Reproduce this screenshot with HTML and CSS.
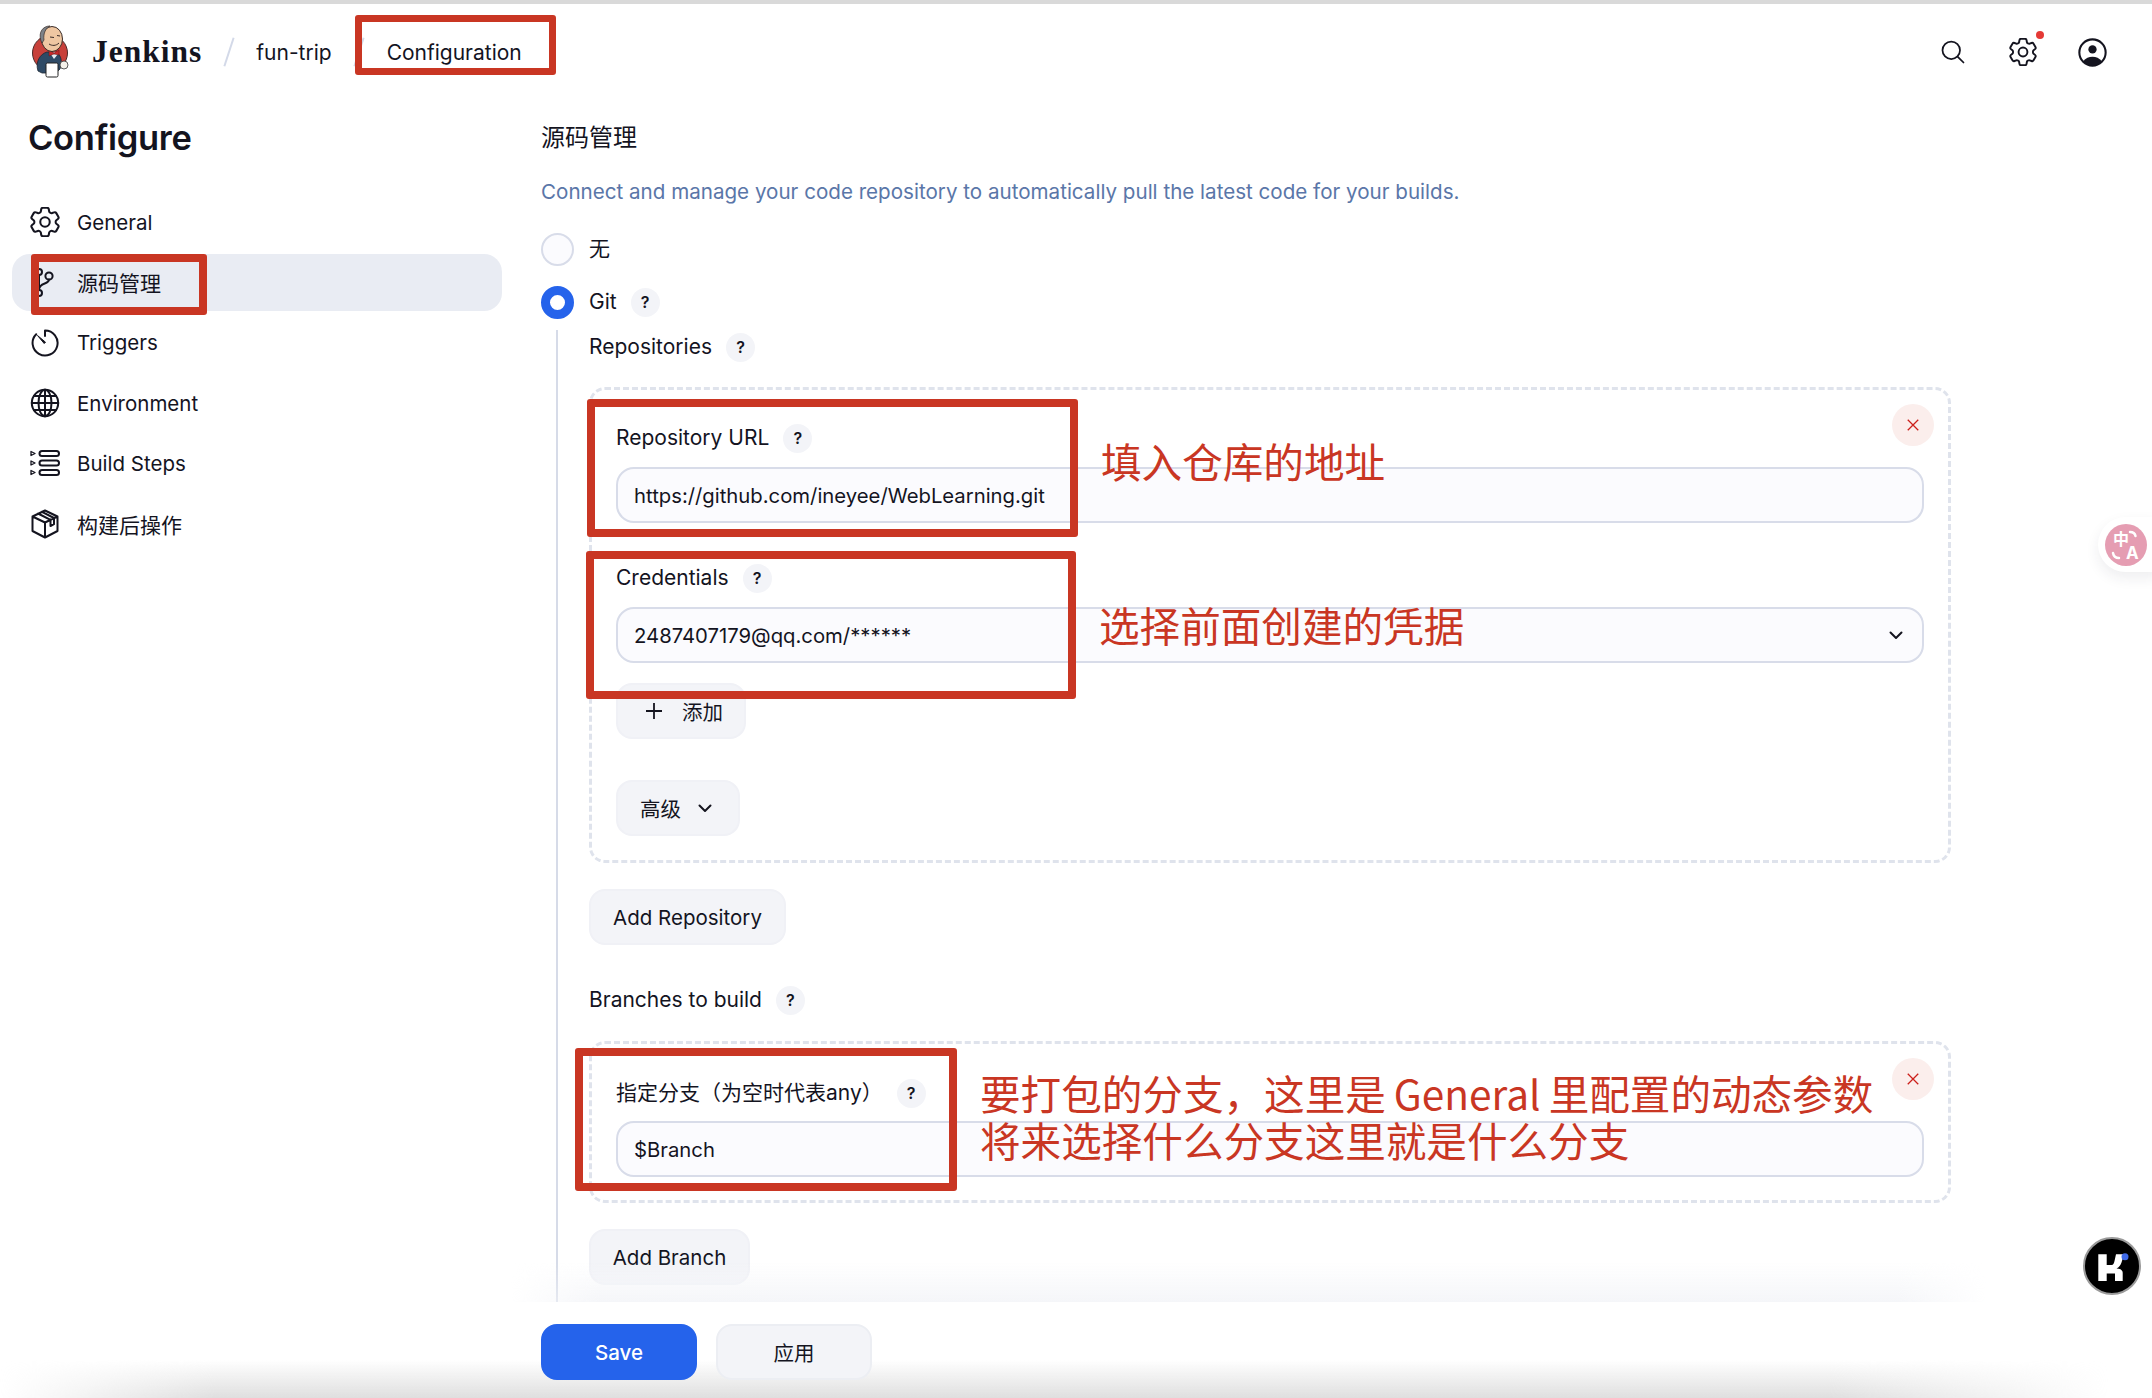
FILE: index.html
```html
<!DOCTYPE html>
<html lang="zh">
<head>
<meta charset="utf-8">
<title>Jenkins - fun-trip Configuration</title>
<link rel="stylesheet" href="styles.css">
</head>
<body>
<div class="app">
  <div class="strip"></div>
  <header class="topbar">
    <svg class="logo" viewBox="30 26 40 54" aria-hidden="true">
      <circle cx="50" cy="54" r="17.500" fill="#c8403a" stroke="#4a2a28" stroke-width="1"/>
      <path d="M38 72C35 63 40 55 47 53L57 54C62 57 62 64 60 70L56 74H42Z" fill="#2e4a66" stroke="#1c2733" stroke-width=".8"/>
      <path d="M50 54L54 60L58 55L55 53Z" fill="#e8edf2"/>
      <path d="M49 51L54 54L59 51V56L54 55L49 57Z" fill="#c8282a" stroke="#5a1a1a" stroke-width=".5"/>
      <ellipse cx="52" cy="40" rx="10.500" ry="12.500" fill="#efc7a2" stroke="#3a2c28" stroke-width="1"/>
      <path d="M41 42C38 33 43 27 50 27C46 29 43 34 44 41L42 44Z" fill="#7d8288" stroke="#3a2c28" stroke-width=".7"/>
      <path d="M50 38l4 .5M57 36.500l3 .5M49 45c3 2 7 2 10-1" fill="none" stroke="#3a2c28" stroke-width="1"/>
      <rect x="46" y="64" width="12" height="14" rx="1.500" fill="#fff" stroke="#222" stroke-width="1"/>
      <circle cx="64" cy="66" r="4" fill="#f4f1ea" stroke="#333" stroke-width=".8"/>
    </svg>
    <span class="brand">Jenkins</span>
    <span class="slash"></span>
    <span class="crumb">fun-trip</span>
    <span class="slash"></span>
    <span class="crumb crumb-last">Configuration</span>
    <div class="top-actions">
      <svg class="top-icon" viewBox="0 0 32 32" aria-hidden="true"><circle cx="14" cy="14" r="10" class="ln"/><path d="M21.500 21.500L28 28" class="ln"/></svg>
      <span class="gear-wrap">
        <svg class="top-icon" viewBox="2.500 2.500 19 19" aria-hidden="true"><path class="ln-thin" d="M9.594 3.94c.09-.542.56-.94 1.11-.94h2.593c.55 0 1.02.398 1.11.94l.213 1.281c.063.374.313.686.645.87.074.04.147.083.22.127.325.196.72.257 1.075.124l1.217-.456a1.125 1.125 0 0 1 1.37.49l1.296 2.247a1.125 1.125 0 0 1-.26 1.431l-1.003.827c-.293.241-.438.613-.43.992a7.723 7.723 0 0 1 0 .255c-.008.378.137.75.43.991l1.004.827c.424.35.534.955.26 1.43l-1.298 2.247a1.125 1.125 0 0 1-1.369.491l-1.217-.456c-.355-.133-.75-.072-1.076.124a6.47 6.47 0 0 1-.22.128c-.331.183-.581.495-.644.869l-.213 1.281c-.09.543-.56.94-1.11.94h-2.594c-.55 0-1.019-.398-1.11-.94l-.213-1.281c-.062-.374-.312-.686-.644-.87a6.52 6.52 0 0 1-.22-.127c-.325-.196-.72-.257-1.076-.124l-1.217.456a1.125 1.125 0 0 1-1.369-.49l-1.297-2.247a1.125 1.125 0 0 1 .26-1.431l1.004-.827c.292-.24.437-.613.43-.991a6.932 6.932 0 0 1 0-.255c.007-.38-.138-.751-.43-.992l-1.004-.827a1.125 1.125 0 0 1-.26-1.43l1.297-2.247a1.125 1.125 0 0 1 1.37-.491l1.216.456c.356.133.751.072 1.076-.124.072-.044.146-.086.22-.128.332-.183.582-.495.644-.869l.214-1.28Z"/><circle cx="12" cy="12" r="3" class="ln-thin"/></svg>
        <span class="dot"></span>
      </span>
      <svg class="top-icon user-icon" viewBox="0 0 28 28" aria-hidden="true"><circle cx="14" cy="14" r="12.700" class="ln"/><circle cx="14" cy="11" r="4" fill="#14141f"/><path d="M5 22.500C7.500 19 10.500 18 14 18s6.500 1 9 4.500C20.500 25.500 17.500 26.700 14 26.700S7.500 25.500 5 22.500Z" fill="#14141f"/></svg>
    </div>
  </header>

  <main class="main">
    <aside class="sidebar">
      <h1 class="side-title">Configure</h1>
      <nav class="side-nav">
        <a class="side-item">
          <svg class="side-icon" viewBox="2.500 2.500 19 19" aria-hidden="true"><path class="ln-thin" d="M9.594 3.94c.09-.542.56-.94 1.11-.94h2.593c.55 0 1.02.398 1.11.94l.213 1.281c.063.374.313.686.645.87.074.04.147.083.22.127.325.196.72.257 1.075.124l1.217-.456a1.125 1.125 0 0 1 1.37.49l1.296 2.247a1.125 1.125 0 0 1-.26 1.431l-1.003.827c-.293.241-.438.613-.43.992a7.723 7.723 0 0 1 0 .255c-.008.378.137.75.43.991l1.004.827c.424.35.534.955.26 1.43l-1.298 2.247a1.125 1.125 0 0 1-1.369.491l-1.217-.456c-.355-.133-.75-.072-1.076.124a6.47 6.47 0 0 1-.22.128c-.331.183-.581.495-.644.869l-.213 1.281c-.09.543-.56.94-1.11.94h-2.594c-.55 0-1.019-.398-1.11-.94l-.213-1.281c-.062-.374-.312-.686-.644-.87a6.52 6.52 0 0 1-.22-.127c-.325-.196-.72-.257-1.076-.124l-1.217.456a1.125 1.125 0 0 1-1.369-.49l-1.297-2.247a1.125 1.125 0 0 1 .26-1.431l1.004-.827c.292-.24.437-.613.43-.991a6.932 6.932 0 0 1 0-.255c.007-.38-.138-.751-.43-.992l-1.004-.827a1.125 1.125 0 0 1-.26-1.43l1.297-2.247a1.125 1.125 0 0 1 1.37-.491l1.216.456c.356.133.751.072 1.076-.124.072-.044.146-.086.22-.128.332-.183.582-.495.644-.869l.214-1.28Z"/><circle cx="12" cy="12" r="3" class="ln-thin"/></svg>
          <span>General</span>
        </a>
        <a class="side-item side-active side-cjk">
          <svg class="side-icon" viewBox="0 0 30 30" aria-hidden="true"><circle cx="9" cy="5" r="3" class="ln"/><circle cx="9" cy="26" r="3" class="ln"/><circle cx="19" cy="9" r="3.600" class="ln"/><path class="ln" d="M9 8V23M19 12.600C19 18 9 15 9 23"/></svg>
          <span>源码管理</span>
        </a>
        <a class="side-item">
          <svg class="side-icon" viewBox="0 0 30 30" aria-hidden="true"><path class="ln" d="M15 2.500A12.500 12.500 0 1 1 6.200 6.200M15 2.500V8"/><path d="M7.500 7.500L15.500 14.200L14.200 15.500Z" fill="#14141f" stroke="#14141f" stroke-width="1" stroke-linejoin="round"/></svg>
          <span>Triggers</span>
        </a>
        <a class="side-item">
          <svg class="side-icon" viewBox="0 0 30 30" aria-hidden="true"><circle cx="15" cy="15" r="13.200" class="ln"/><ellipse cx="15" cy="15" rx="6.500" ry="13.200" class="ln"/><path class="ln" d="M15 1.800V28.200M1.800 15H28.200M4 8H26M4 22H26"/></svg>
          <span>Environment</span>
        </a>
        <a class="side-item">
          <svg class="side-icon" viewBox="0 0 30 30" aria-hidden="true"><rect x="9.500" y="3" width="19.500" height="5" rx="2.500" class="ln"/><rect x="9.500" y="12.500" width="19.500" height="5" rx="2.500" class="ln"/><rect x="9.500" y="22" width="19.500" height="5" rx="2.500" class="ln"/><path class="ln-s" d="M1 3.500L5 5.500L1 7.500ZM1 13L5 15L1 17ZM1 22.500L5 24.500L1 26.500Z"/></svg>
          <span>Build Steps</span>
        </a>
        <a class="side-item side-cjk">
          <svg class="side-icon" viewBox="0 0 30 30" aria-hidden="true"><path class="ln" d="M15 1.500L27.500 7.500V22L15 28.500L2.500 22V7.500ZM2.500 7.500L15 13.500L27.500 7.500M15 13.500V28.500M8 4.500L20.500 10.800V17L24 15.200V9M12 2.800L24 9"/></svg>
          <span>构建后操作</span>
        </a>
      </nav>
    </aside>

    <section class="content">
      <h2 class="section-title">源码管理</h2>
      <p class="section-desc">Connect and manage your code repository to automatically pull the latest code for your builds.</p>

      <div class="radio-row radio-none">
        <span class="radio"></span><span>无</span>
      </div>
      <div class="radio-row radio-git">
        <span class="radio radio-on"></span><span>Git</span><span class="help">?</span>
      </div>

      <div class="git-body">
        <div class="label-row label-first"><span>Repositories</span><span class="help">?</span></div>

        <div class="card card-repo">
          <button class="close"><svg viewBox="0 0 16 16" aria-hidden="true"><path d="M2 2L14 14M14 2L2 14"/></svg></button>
          <div class="label-row"><span>Repository URL</span><span class="help">?</span></div>
          <div class="field">https://github.com/ineyee/WebLearning.git</div>
          <div class="label-row label-gap"><span>Credentials</span><span class="help">?</span></div>
          <div class="field field-select">
            <span>2487407179@qq.com/******</span>
            <svg class="chev" viewBox="0 0 16 16" aria-hidden="true"><path d="M2.500 5.500L8 11L13.500 5.500"/></svg>
          </div>
          <button class="btn btn-add"><svg class="plus" viewBox="0 0 18 18" aria-hidden="true"><path d="M9 1V17M1 9H17"/></svg><span>添加</span></button>
          <button class="btn btn-adv"><span>高级</span><svg class="chev chev-sm" viewBox="0 0 16 16" aria-hidden="true"><path d="M2.500 5.500L8 11L13.500 5.500"/></svg></button>
        </div>

        <button class="btn btn-plain btn-repo">Add Repository</button>

        <div class="label-row label-branches"><span>Branches to build</span><span class="help">?</span></div>

        <div class="card card-branch">
          <button class="close"><svg viewBox="0 0 16 16" aria-hidden="true"><path d="M2 2L14 14M14 2L2 14"/></svg></button>
          <div class="label-row label-spec"><span>指定分支（为空时代表any）</span><span class="help">?</span></div>
          <div class="field field-branch">$Branch</div>
        </div>

        <button class="btn btn-plain btn-branch">Add Branch</button>
      </div>
      <div class="fade"></div>
    </section>
  </main>

  <footer class="footer">
    <button class="action action-save">Save</button>
    <button class="action">应用</button>
  </footer>

  <div class="mark mark-config"></div>
  <div class="mark mark-side"></div>
  <div class="mark mark-repo"></div>
  <div class="mark mark-cred"></div>
  <div class="mark mark-branch"></div>

  <div class="note note-repo">填入仓库的地址</div>
  <div class="note note-cred">选择前面创建的凭据</div>
  <div class="note note-b1">要打包的分支，这里是 General 里配置的动态参数</div>
  <div class="note note-b2">将来选择什么分支这里就是什么分支</div>

  <div class="translate">
    <span class="translate-disc">
      <span class="tz">中</span><span class="ta">A</span>
      <svg class="tarcs" viewBox="0 0 42 42" aria-hidden="true"><path d="M25 8C28 8 30 9.500 30.500 12M8 29C8.500 32 10.500 34 14 34"/></svg>
    </span>
  </div>
  <div class="kbadge">
    <svg class="klogo" viewBox="0 0 54 54" aria-hidden="true">
      <path fill="#fff" d="M13.300 15.300H21.700V26H26.500C28.500 26 29 24 29.500 22L31 15.300H39L36.500 23.500C35.800 26 34 28.500 31.500 29.500C35 29.500 37.700 31 37.700 34V42H30V34.500H21.700V42H13.300Z"/>
      <circle cx="40" cy="17.700" r="3.500" fill="#3f6ae8"/>
    </svg>
  </div>
</div>
</body>
</html>
```

FILE: styles.css
```css
* { box-sizing: border-box; }
html, body { margin: 0; padding: 0; }
body {
  background: #fff;
  color: #14141f;
  font-family: "Inter", "Noto Sans CJK SC", sans-serif;
  font-size: 21px;
}
.app {
  position: relative;
  width: 2152px;
  height: 1398px;
  overflow: hidden;
  display: flex;
  flex-direction: column;
}
.strip { height: 4px; background: #d9d9d9; flex: none; }

.ln { fill: none; stroke: #14141f; stroke-width: 2; stroke-linecap: round; stroke-linejoin: round; }
.ln-thin { fill: none; stroke: #14141f; stroke-width: 1.300; stroke-linecap: round; stroke-linejoin: round; }
.ln-s { fill: none; stroke: #14141f; stroke-width: 1.300; stroke-linejoin: round; }

/* top bar */
.topbar {
  height: 100px;
  flex: none;
  display: flex;
  align-items: center;
  padding: 0 45px 4px 30px;
}
.logo { width: 40px; height: 54px; flex: none; }
.brand {
  margin-left: 22px;
  font-family: "Liberation Serif", serif;
  font-weight: 700;
  font-size: 31.500px;
  letter-spacing: 1px;
}
.slash {
  width: 2px;
  height: 30px;
  margin-left: 26px;
  background: #d3d9e8;
  transform: rotate(18deg);
}
.crumb { margin-left: 26px; font-size: 21px; }
.crumb-last { margin-left: 27px; }
.top-actions {
  margin-left: auto;
  display: flex;
  align-items: center;
  gap: 41.500px;
}
.top-icon { width: 28px; height: 28px; display: block; }
.user-icon { width: 29px; height: 29px; }
.gear-wrap { position: relative; display: block; }
.dot {
  position: absolute;
  top: -7px;
  right: -7px;
  width: 8px;
  height: 8px;
  border-radius: 50%;
  background: #e53935;
}

/* layout */
.main { flex: 1; display: flex; min-height: 0; }
.sidebar {
  width: 529px;
  margin-left: 12px;
  padding-right: 39px;
  padding-top: 14px;
  flex: none;
}
.side-title {
  margin: 0 0 35.700px 16px;
  font-size: 34.500px;
  line-height: 40px;
  font-weight: 600;
  letter-spacing: -.3px;
}
.side-nav { display: flex; flex-direction: column; gap: 3.300px; }
.side-item {
  height: 57px;
  display: flex;
  align-items: center;
  gap: 17px;
  padding-left: 18px;
  border-radius: 18px;
  font-size: 20.500px;
}
.side-cjk { font-size: 21px; }
.side-active { background: #e9ecf3; }
.side-icon { width: 30px; height: 30px; flex: none; }

/* content */
.content {
  position: relative;
  flex: 1;
  padding: 14px 201px 0 0;
  display: flex;
  flex-direction: column;
}
.section-title {
  margin: 0;
  font-size: 24px;
  line-height: 40px;
  font-weight: 400;
}
.section-desc {
  margin: 20px 0 0;
  line-height: 28px;
  font-size: 20.600px;
  color: #5a76a8;
}
.radio-row {
  display: flex;
  align-items: center;
  height: 32px;
  line-height: 32px;
}
.radio-none { margin-top: 27px; }
.radio-git { margin-top: 21px; }
.radio {
  width: 33px;
  height: 33px;
  border-radius: 50%;
  border: 2px solid #d8dce9;
  background: #fbfbfe;
  margin-right: 15px;
  flex: none;
}
.radio-on { border: 9px solid #2563eb; background: #fff; }
.help {
  width: 29px;
  height: 29px;
  margin-left: 14px;
  border-radius: 50%;
  background: #f3f4f8;
  display: flex;
  align-items: center;
  justify-content: center;
  font-size: 16px;
  font-weight: 600;
}
.git-body {
  flex: 1;
  margin: 12px 0 0 15px;
  padding: 2px 0 0 31px;
  border-left: 2px solid #d6dbe8;
}
.label-row {
  display: flex;
  align-items: center;
  height: 30px;
  line-height: 30px;
}
.card {
  position: relative;
  border: 3px dashed #dfe3ec;
  border-radius: 16px;
  padding: 33px 24px 24px;
}
.card-repo { margin-top: 25px; }
.card-branch { margin-top: 26px; padding: 34px 24px 23px; }
.close {
  position: absolute;
  top: 14px;
  right: 14px;
  width: 42px;
  height: 42px;
  border: 0;
  border-radius: 50%;
  background: #fbeeec;
  padding: 0;
  display: flex;
  align-items: center;
  justify-content: center;
}
.close svg { width: 14px; height: 14px; }
.close path { fill: none; stroke: #cc1f1a; stroke-width: 1.500; }
.field {
  margin-top: 14px;
  height: 56px;
  display: flex;
  align-items: center;
  justify-content: space-between;
  padding: 0 18px 0 16px;
  border: 2px solid #d8dce9;
  border-radius: 18px;
  background: #fbfbfe;
  font-size: 20.300px;
}
.field-branch { margin-top: 13px; }
.label-gap { margin-top: 40px; }
.chev { width: 16px; height: 16px; display: block; }
.chev path { fill: none; stroke: #14141f; stroke-width: 2; stroke-linecap: round; stroke-linejoin: round; }
.btn {
  display: flex;
  align-items: center;
  height: 56px;
  border: 2px solid #f0f1f6;
  border-radius: 16px;
  background: #f3f4f8;
  color: #14141f;
  font: inherit;
  font-size: 20.500px;
  padding: 0;
}
.btn-add { margin-top: 20px; width: 130px; padding-left: 27px; gap: 19px; }
.plus { width: 18px; height: 18px; }
.plus path { fill: none; stroke: #14141f; stroke-width: 1.800; }
.btn-adv { margin-top: 41px; width: 124px; padding-left: 22px; gap: 16px; }
.btn-plain { justify-content: center; }
.btn-repo { margin-top: 26px; width: 197px; }
.label-branches { margin-top: 40px; }
.btn-branch { margin-top: 26px; width: 161px; }
.fade {
  position: absolute;
  left: -30px;
  width: 1475px;
  bottom: 0;
  height: 40px;
  background: linear-gradient(to bottom, rgba(244,245,248,0), #f5f6f9);
  -webkit-mask-image: linear-gradient(to right, transparent 0, #000 6%, #000 94%, transparent 100%);
  mask-image: linear-gradient(to right, transparent 0, #000 6%, #000 94%, transparent 100%);
  pointer-events: none;
}

/* footer */
.footer {
  position: relative;
  height: 96px;
  flex: none;
  padding: 22px 0 0 541px;
  display: flex;
  gap: 19px;
  align-items: flex-start;
  background: #fff;
}
.footer::after {
  content: "";
  position: absolute;
  left: 0;
  right: 0;
  bottom: 0;
  height: 38px;
  background: linear-gradient(to bottom, rgba(225,225,225,0), #dfdfdf);
  -webkit-mask-image: linear-gradient(to right, transparent 0, #000 10%, #000 85%, transparent 98%);
  mask-image: linear-gradient(to right, transparent 0, #000 10%, #000 85%, transparent 98%);
}
.action {
  position: relative;
  z-index: 1;
  width: 156px;
  height: 56px;
  border: 2px solid #eceef3;
  border-radius: 16px;
  background: #f3f4f8;
  color: #14141f;
  font: inherit;
  font-size: 20.500px;
}
.action-save {
  background: #2563eb;
  border-color: #2563eb;
  color: #fff;
  font-weight: 500;
}

/* red annotation frames */
.mark {
  position: absolute;
  border: 8px solid #c93623;
  border-radius: 3px;
  pointer-events: none;
}
.mark-config { left: 355px; top: 15px; width: 201px; height: 60px; border-width: 7px; }
.mark-side { left: 31px; top: 254px; width: 176px; height: 61px; }
.mark-repo { left: 587px; top: 399px; width: 491px; height: 138px; }
.mark-cred { left: 586px; top: 551px; width: 490px; height: 148px; }
.mark-branch { left: 575px; top: 1048px; width: 382px; height: 143px; }

.note {
  position: absolute;
  color: #c93623;
  font-family: "Noto Sans CJK SC", sans-serif;
  font-size: 40.600px;
  line-height: 48px;
  white-space: nowrap;
}
.note-repo { left: 1101px; top: 437px; }
.note-cred { left: 1099px; top: 601px; }
.note-b1 { left: 980px; top: 1069px; word-spacing: -1px; }
.note-b2 { left: 980px; top: 1116px; }

/* floating widgets */
.translate {
  position: absolute;
  left: 2098px;
  top: 517px;
  width: 60px;
  height: 55px;
  border-radius: 28px 0 0 28px;
  background: #fff;
  box-shadow: 0 6px 14px rgba(40,40,60,.08);
  padding: 7px;
}
.translate-disc {
  position: relative;
  display: block;
  width: 42px;
  height: 42px;
  border-radius: 50%;
  background: #e59db2;
  color: #fff;
  font-weight: 700;
}
.tz { position: absolute; left: 8px; top: 6px; font-size: 16px; line-height: 18px; }
.ta { position: absolute; left: 21px; top: 20px; font-size: 17px; line-height: 18px; }
.tarcs { position: absolute; inset: 0; width: 42px; height: 42px; }
.tarcs path { fill: none; stroke: #fff; stroke-width: 2.500; stroke-linecap: round; }
.kbadge {
  position: absolute;
  left: 2083px;
  top: 1237px;
  width: 58px;
  height: 58px;
  border-radius: 50%;
  background: #000;
  border: 2px solid #9a9a9a;
}
.klogo { display: block; width: 54px; height: 54px; }
```
